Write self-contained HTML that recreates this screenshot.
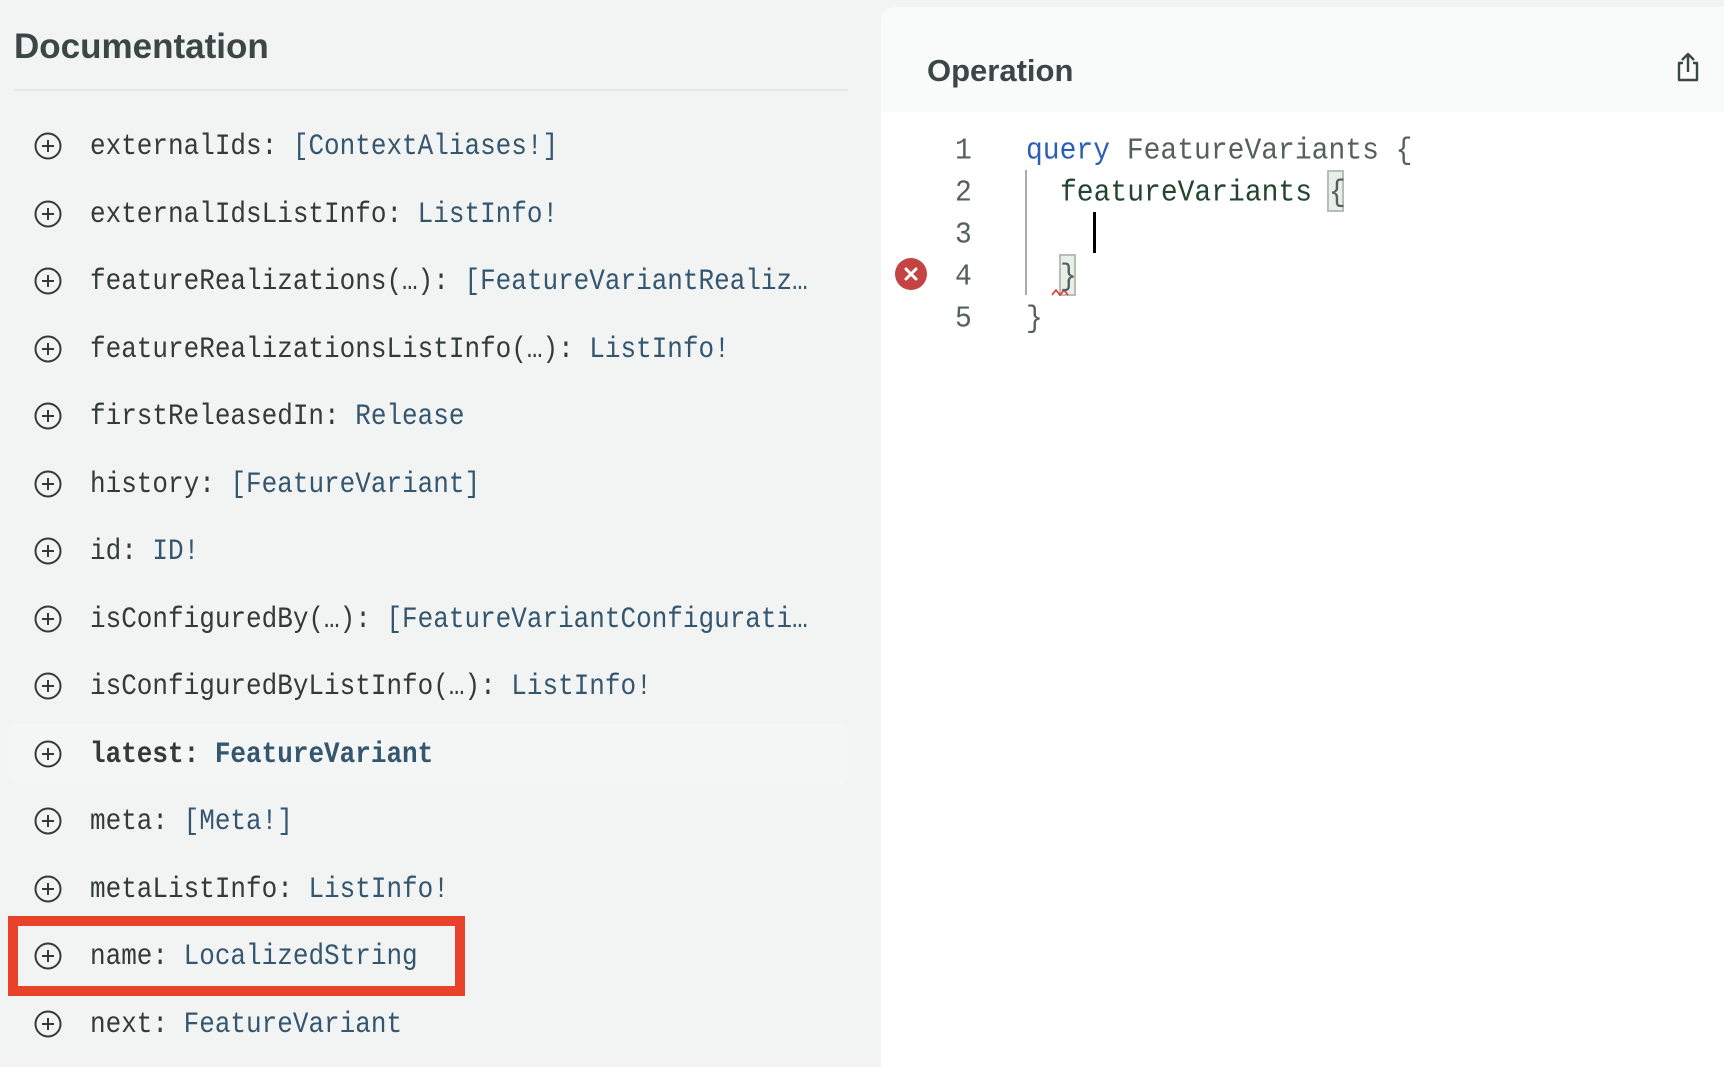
<!DOCTYPE html>
<html><head><meta charset="utf-8"><style>
*{margin:0;padding:0;box-sizing:border-box}
body{width:1724px;height:1054px;background:#f2f3f3;position:relative;overflow:hidden;font-family:"Liberation Sans",sans-serif}
.title{position:absolute;left:14px;top:27px;font-size:35px;color:#3b4745;font-weight:bold}
.div{position:absolute;left:14px;top:89px;width:834px;height:2px;background:#e6e8e8}
.row{position:absolute;left:9px;width:839px;height:60px}
.row .ic{position:absolute;left:25px;top:16px;width:28px;height:28px}
.row .t{position:absolute;left:81px;top:12px;font-family:"Liberation Mono",monospace;font-size:26px;line-height:36px;color:#333b39;white-space:pre;transform:scaleY(1.15);transform-origin:left center}
.ty{color:#34566f}
.hl{background:#f4f5f5;border-radius:6px}
.hl .t{font-weight:bold}
.red{position:absolute;left:8px;top:916px;width:457px;height:80px;border:10px solid #e8432a}
.panel{position:absolute;left:881px;top:7px;width:850px;height:1060px;background:#fff;border-radius:14px 0 0 0;overflow:hidden}
.hdr{position:absolute;left:0;top:0;width:100%;height:105px;background:#f9fafa}
.op{position:absolute;left:46px;top:46px;font-size:31px;font-weight:bold;color:#3b4745}
.code{position:absolute;font-family:"Liberation Mono",monospace;font-size:28px;line-height:42px;white-space:pre;transform:scaleY(1.1);transform-origin:left center}
.ln{color:#55605e}
</style></head><body>
<div class="title">Documentation</div>
<div class="div"></div>

<div class="row" style="top:116px"><svg class="ic" viewBox="0 0 28 28"><circle cx="14" cy="14" r="12.5" fill="none" stroke="#333b39" stroke-width="2"/><path d="M14 8v12M8 14h12" stroke="#333b39" stroke-width="2"/></svg><div class="t">externalIds: <span class="ty">[ContextAliases!]</span></div></div>
<div class="row" style="top:184px"><svg class="ic" viewBox="0 0 28 28"><circle cx="14" cy="14" r="12.5" fill="none" stroke="#333b39" stroke-width="2"/><path d="M14 8v12M8 14h12" stroke="#333b39" stroke-width="2"/></svg><div class="t">externalIdsListInfo: <span class="ty">ListInfo!</span></div></div>
<div class="row" style="top:251px"><svg class="ic" viewBox="0 0 28 28"><circle cx="14" cy="14" r="12.5" fill="none" stroke="#333b39" stroke-width="2"/><path d="M14 8v12M8 14h12" stroke="#333b39" stroke-width="2"/></svg><div class="t">featureRealizations(…): <span class="ty">[FeatureVariantRealiz…</span></div></div>
<div class="row" style="top:319px"><svg class="ic" viewBox="0 0 28 28"><circle cx="14" cy="14" r="12.5" fill="none" stroke="#333b39" stroke-width="2"/><path d="M14 8v12M8 14h12" stroke="#333b39" stroke-width="2"/></svg><div class="t">featureRealizationsListInfo(…): <span class="ty">ListInfo!</span></div></div>
<div class="row" style="top:386px"><svg class="ic" viewBox="0 0 28 28"><circle cx="14" cy="14" r="12.5" fill="none" stroke="#333b39" stroke-width="2"/><path d="M14 8v12M8 14h12" stroke="#333b39" stroke-width="2"/></svg><div class="t">firstReleasedIn: <span class="ty">Release</span></div></div>
<div class="row" style="top:454px"><svg class="ic" viewBox="0 0 28 28"><circle cx="14" cy="14" r="12.5" fill="none" stroke="#333b39" stroke-width="2"/><path d="M14 8v12M8 14h12" stroke="#333b39" stroke-width="2"/></svg><div class="t">history: <span class="ty">[FeatureVariant]</span></div></div>
<div class="row" style="top:521px"><svg class="ic" viewBox="0 0 28 28"><circle cx="14" cy="14" r="12.5" fill="none" stroke="#333b39" stroke-width="2"/><path d="M14 8v12M8 14h12" stroke="#333b39" stroke-width="2"/></svg><div class="t">id: <span class="ty">ID!</span></div></div>
<div class="row" style="top:589px"><svg class="ic" viewBox="0 0 28 28"><circle cx="14" cy="14" r="12.5" fill="none" stroke="#333b39" stroke-width="2"/><path d="M14 8v12M8 14h12" stroke="#333b39" stroke-width="2"/></svg><div class="t">isConfiguredBy(…): <span class="ty">[FeatureVariantConfigurati…</span></div></div>
<div class="row" style="top:656px"><svg class="ic" viewBox="0 0 28 28"><circle cx="14" cy="14" r="12.5" fill="none" stroke="#333b39" stroke-width="2"/><path d="M14 8v12M8 14h12" stroke="#333b39" stroke-width="2"/></svg><div class="t">isConfiguredByListInfo(…): <span class="ty">ListInfo!</span></div></div>
<div class="row hl" style="top:724px"><svg class="ic" viewBox="0 0 28 28"><circle cx="14" cy="14" r="12.5" fill="none" stroke="#333b39" stroke-width="2"/><path d="M14 8v12M8 14h12" stroke="#333b39" stroke-width="2"/></svg><div class="t">latest: <span class="ty">FeatureVariant</span></div></div>
<div class="row" style="top:791px"><svg class="ic" viewBox="0 0 28 28"><circle cx="14" cy="14" r="12.5" fill="none" stroke="#333b39" stroke-width="2"/><path d="M14 8v12M8 14h12" stroke="#333b39" stroke-width="2"/></svg><div class="t">meta: <span class="ty">[Meta!]</span></div></div>
<div class="row" style="top:859px"><svg class="ic" viewBox="0 0 28 28"><circle cx="14" cy="14" r="12.5" fill="none" stroke="#333b39" stroke-width="2"/><path d="M14 8v12M8 14h12" stroke="#333b39" stroke-width="2"/></svg><div class="t">metaListInfo: <span class="ty">ListInfo!</span></div></div>
<div class="row" style="top:926px"><svg class="ic" viewBox="0 0 28 28"><circle cx="14" cy="14" r="12.5" fill="none" stroke="#333b39" stroke-width="2"/><path d="M14 8v12M8 14h12" stroke="#333b39" stroke-width="2"/></svg><div class="t">name: <span class="ty">LocalizedString</span></div></div>
<div class="row" style="top:994px"><svg class="ic" viewBox="0 0 28 28"><circle cx="14" cy="14" r="12.5" fill="none" stroke="#333b39" stroke-width="2"/><path d="M14 8v12M8 14h12" stroke="#333b39" stroke-width="2"/></svg><div class="t">next: <span class="ty">FeatureVariant</span></div></div>
<div class="red"></div>

<div class="panel">
  <div class="hdr"></div>
  <div class="op">Operation</div>
  <svg style="position:absolute;left:795px;top:44px" width="24" height="32" viewBox="0 0 24 32"><path d="M7 12H3v17h18V12h-4" fill="none" stroke="#3b4745" stroke-width="2.4" stroke-linejoin="round"/><path d="M12 21V3M6 9l6-6 6 6" fill="none" stroke="#3b4745" stroke-width="2.4" stroke-linejoin="round"/></svg>

  <div class="code ln" style="left:74px;top:124px">1</div>
  <div class="code ln" style="left:74px;top:166px">2</div>
  <div class="code ln" style="left:74px;top:208px">3</div>
  <div class="code ln" style="left:74px;top:250px">4</div>
  <div class="code ln" style="left:74px;top:292px">5</div>
  <svg style="position:absolute;left:14px;top:251px" width="32" height="32" viewBox="0 0 32 32"><circle cx="16" cy="16" r="16" fill="#c44444"/><path d="M11 11l10 10M21 11L11 21" stroke="#fff" stroke-width="3" stroke-linecap="round"/></svg>

  <div style="position:absolute;left:144px;top:163px;width:2px;height:125px;background:#a8adac"></div>
  <div style="position:absolute;left:446px;top:163px;width:17px;height:42px;background:#e8eee8;border:2px solid #b8bdb8"></div>
  <div style="position:absolute;left:178px;top:247px;width:17px;height:42px;background:#e8eee8;border:2px solid #b8bdb8"></div>
  <div style="position:absolute;left:212px;top:205px;width:3px;height:41px;background:#000"></div>
  <svg style="position:absolute;left:170px;top:281px" width="18" height="8"><path d="M1 7l4-5 4 5 4-5 4 5" fill="none" stroke="#d33" stroke-width="1.6"/></svg>

  <div class="code" style="left:145px;top:124px"><span style="color:#2b5fb4">query</span> <span style="color:#55605e">FeatureVariants {</span></div>
  <div class="code" style="left:179px;top:166px;color:#23452f">featureVariants <span style="color:#55605e">{</span></div>
  <div class="code" style="left:179px;top:250px;color:#55605e">}</div>
  <div class="code" style="left:145px;top:292px;color:#55605e">}</div>
</div>
</body></html>
